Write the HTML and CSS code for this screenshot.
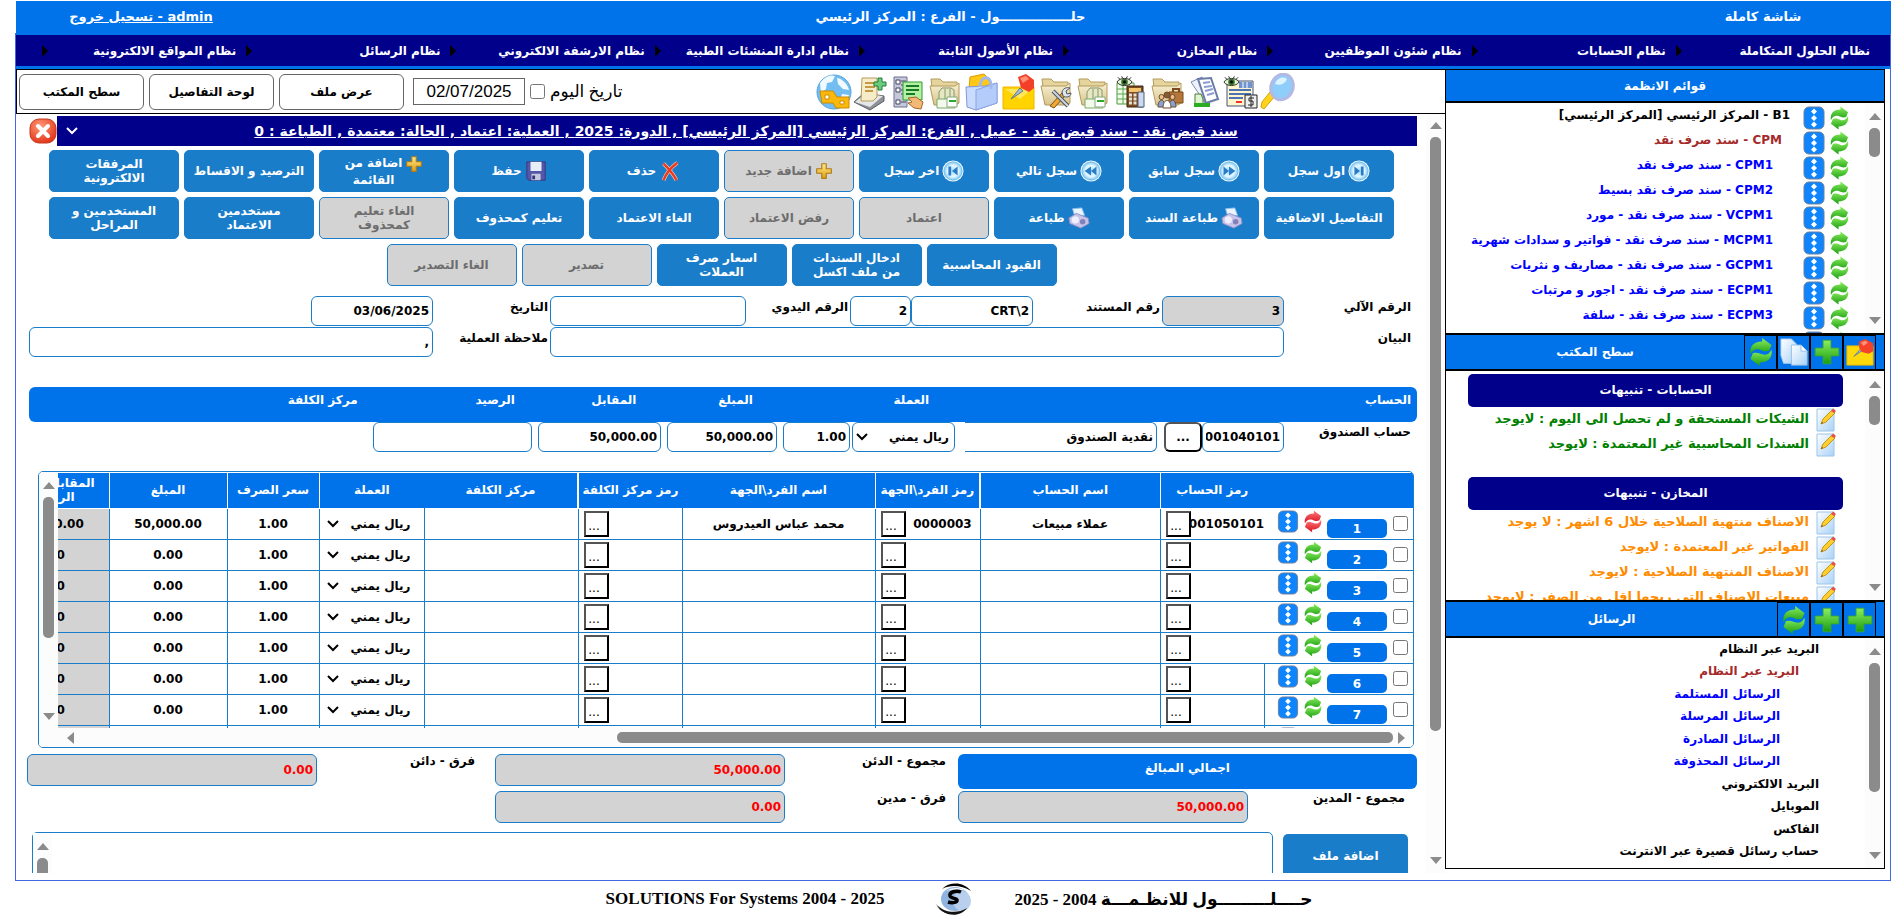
FILE: index.html
```html
<!DOCTYPE html>
<html lang="ar" dir="rtl">
<head>
<meta charset="utf-8">
<title>حلول - سند قبض نقد</title>
<link rel="stylesheet" href="styles.css">
</head>
<body>
<svg class="sprite" aria-hidden="true">
  <defs>
    <linearGradient id="gGreen" x1="0" y1="0" x2="0" y2="1"><stop offset="0" stop-color="#8cf060"/><stop offset="1" stop-color="#1a9c10"/></linearGradient>
    <linearGradient id="gRed" x1="0" y1="0" x2="0" y2="1"><stop offset="0" stop-color="#ff7a7a"/><stop offset="1" stop-color="#d80f1c"/></linearGradient>
    <linearGradient id="gPaper" x1="0" y1="0" x2="1" y2="1"><stop offset="0" stop-color="#ffffff"/><stop offset="1" stop-color="#a9d2f7"/></linearGradient>
    <linearGradient id="gGold" x1="0" y1="0" x2="0" y2="1"><stop offset="0" stop-color="#ffe98a"/><stop offset="1" stop-color="#e0a012"/></linearGradient>
    <linearGradient id="gFolder" x1="0" y1="0" x2="0" y2="1"><stop offset="0" stop-color="#f8f1d4"/><stop offset="1" stop-color="#d9c48c"/></linearGradient>
    <radialGradient id="gBall"><stop offset="0" stop-color="#9fdcff"/><stop offset=".6" stop-color="#e8f8ff"/><stop offset="1" stop-color="#7cc8f4"/></radialGradient>
    <radialGradient id="gClose" cx=".4" cy=".3" r=".8"><stop offset="0" stop-color="#ff9a78"/><stop offset="1" stop-color="#e02a10"/></radialGradient>
  </defs>
  <symbol id="arrows" viewBox="0 0 20 24"><path d="M1 14C0 8 3 3 11 3V0l8 6-2 5c-4 1-5 0-8-1-3-1-6 0-8 4Z"/><path d="M19 10c1 6-2 11-10 11v3l-8-6 2-5c4-1 5 0 8 1 3 1 6 0 8-4Z"/></symbol>
  <symbol id="dots" viewBox="0 0 22 24"><rect x="1" y="1" width="20" height="22" rx="5" fill="#0f84ff" stroke="#6f7f96"/><g fill="#fff"><path d="m11 2.500 3 3-3 3-3-3zM11 9l3 3-3 3-3-3zM11 15.500l3 3-3 3-3-3z"/></g></symbol>
  <symbol id="plus" viewBox="0 0 32 32"><path d="M11.500 2.500h9v9h9v9h-9v9h-9v-9h-9v-9h9z" fill="url(#gGreen)" stroke="#3aa82c" stroke-linejoin="round"/></symbol>
  <symbol id="goldplus" viewBox="0 0 32 32"><path d="M12 3h8v9h9v8h-9v9h-8v-9H3v-8h9z" fill="url(#gGold)" stroke="#b07a18" stroke-width="2" stroke-linejoin="round"/></symbol>
  <symbol id="copy" viewBox="0 0 32 32"><path d="M1 1h12l6 6v22H4L1 20z" fill="url(#gPaper)" stroke="#9cc4ea"/><path d="M13 8h11l7 7v16H13z" fill="url(#gPaper)" stroke="#8bb8e4"/><path d="M24 8v7h7" fill="#fff" stroke="#8bb8e4"/></symbol>
  <symbol id="pin" viewBox="0 0 32 32"><path d="M1 9h30v22H1z" fill="#ffd90a" stroke="#e3b300"/><path d="M9 21 17 12l2 2z" fill="#9db4c8" stroke="#64809a"/><path d="m15 4 7-3 9 5v9l-5 3-8-2-3-5z" fill="#f5432a"/><path d="m17 5 5-2 3 2-5 4z" fill="#ff9378"/></symbol>
  <symbol id="note" viewBox="0 0 20 24"><path d="M1 1h17v22H1z" fill="url(#gPaper)" stroke="#9cc4ea"/><path d="m5 16 2-5 9-9 3 3-9 9z" fill="#ffcf2e" stroke="#c99416"/><path d="m5 16 1-2 1 1z" fill="#444"/><path d="m15 3 2-2.500 3 2.500-2 2z" fill="#e6504c"/></symbol>
  <symbol id="close" viewBox="0 0 28 26"><rect x="1" y="1" width="26" height="24" rx="9" fill="url(#gClose)" stroke="#c23a20"/><path d="m9 8 10 10M19 8 9 18" stroke="#fff" stroke-width="4" stroke-linecap="round"/></symbol>
  <symbol id="ball" viewBox="0 0 24 24"><circle cx="12" cy="12" r="11.500" fill="#fff"/><circle cx="12" cy="12" r="10" fill="url(#gBall)" stroke="#6bbcf0"/></symbol>
  <symbol id="first" viewBox="0 0 24 24"><use href="#ball"/><path d="M7 7v10l6-5zM14 7h3v10h-3z" fill="#2a7cc8"/></symbol>
  <symbol id="prev" viewBox="0 0 24 24"><use href="#ball"/><path d="M6 7v10l6-5zM12 7v10l7-5z" fill="#2a7cc8"/></symbol>
  <symbol id="next" viewBox="0 0 24 24"><use href="#ball"/><path d="M12 7v10l-7-5zM18 7v10l-6-5z" fill="#2a7cc8"/></symbol>
  <symbol id="last" viewBox="0 0 24 24"><use href="#ball"/><path d="M7 7h3v10H7zM17 7v10l-6-5z" fill="#2a7cc8"/></symbol>
  <symbol id="printer" viewBox="0 0 24 24"><path d="m5 2 10-1 3 8-10 3z" fill="#eaf5ff" stroke="#8fc3ea"/><path d="m1 12 8-5 13 5 1 6-9 5L2 18z" fill="#c6c4ea" stroke="#8f8cc4"/><circle cx="8" cy="14" r="4" fill="#f0eefc"/><circle cx="16" cy="16" r="3" fill="#8481b8"/></symbol>
  <symbol id="cross" viewBox="0 0 24 24"><path d="M5 4c4 4 10 10 14 18M20 3C13 8 8 14 5 22" fill="none" stroke="#ffc4b0" stroke-width="4"/><path d="M5 4c4 4 10 10 14 18M20 3C13 8 8 14 5 22" fill="none" stroke="#ea3a20" stroke-width="2.500"/></symbol>
  <symbol id="disk" viewBox="0 0 24 24"><path d="M2 2h20v20H4l-2-2z" fill="#5656a8" stroke="#34347c"/><path d="M6 2h12v10H6z" fill="#e8eef8"/><path d="M7 15h10v7H7z" fill="#c4c8dc"/><path d="M8 17h3v4H8z" fill="#34347c"/></symbol>
  <symbol id="search" viewBox="0 0 36 38"><path d="m4 36-3-2 1-5 8-10 5 4z" fill="#ffd21c" stroke="#d9a200"/><ellipse cx="22" cy="14" rx="11" ry="13" fill="#8fcdfb" stroke="#b4b8e4" stroke-width="3" transform="rotate(20 22 14)"/><path d="M15 11c2-6 8-8 12-5-2 5-7 7-12 5z" fill="#dff3ff"/></symbol>
  <symbol id="eye" viewBox="0 0 18 12"><path d="M1 6c3-5 13-5 16 0-3 5-13 5-16 0z" fill="#e6f4d8" stroke="#222"/><circle cx="9" cy="6" r="3.500" fill="#38702a"/><circle cx="9" cy="6" r="1.500"/><path d="M4 3 2 1M7 2 6 0M11 2l1-2M14 3l2-2" stroke="#222"/></symbol>
  <symbol id="report" viewBox="0 0 36 38"><path d="M4 8h26v25H4z" fill="#fff6cc" stroke="#44527c"/><path d="M6 17h22M6 21h22M6 25h14" stroke="#4d72b8" stroke-width="2"/><path d="M13 29h6" stroke="#e33" stroke-width="2"/><path d="M16 9h13v6H16z" fill="#7094d0"/><path d="M20 9v6M24 9v6" stroke="#fff"/><use href="#eye" x="0" y="3" width="17" height="12"/><path d="M22 22h12v13H22z" fill="#eee" stroke="#222"/><path d="M31 25h-5v3h4v4h-5M28 23v11" fill="none" stroke="#222"/></symbol>
  <symbol id="docs" viewBox="0 0 36 38"><path d="m5 9 11-5 12 18-9 8z" fill="#eef2fb" stroke="#7b8bb0"/><path d="m12 6 13-1 7 21-12 4z" fill="#fff" stroke="#6b7ba8" stroke-width="2"/><path d="m17 10 7-1M18 14l8-1M19 18l8-2M21 22l7-2" stroke="#8c9cd0" stroke-width="2"/><path d="M9 21h6l2 5v6H9z" fill="#dff5d0" stroke="#4a7a3a"/><path d="M8 30h16v4H8z" fill="#2cab24"/></symbol>
  <symbol id="folder" viewBox="0 0 36 38"><path d="M4 6h9l3 3h14v22H7z" fill="#e5d49c" stroke="#b39b5c"/><path d="M3 13h25l4-3v20l-3 2H7z" fill="url(#gFolder)" stroke="#b39b5c"/></symbol>
  <symbol id="people" viewBox="0 0 36 38"><use href="#folder"/><path d="M20 19h14v11H20z" fill="#b5763a" stroke="#7c4a1c"/><path d="M24 19v-3h6v3" fill="none" stroke="#7c4a1c" stroke-width="2"/><g stroke="#6c4b2c"><path d="M9 34c0-9 7-9 7 0zM20 34c0-9 7-9 7 0z" fill="#86a0d8"/><path d="M14 35c0-10 8-10 8 0z" fill="#fff"/><circle cx="12.500" cy="24" r="2.500" fill="#f0c090"/><circle cx="18" cy="22" r="3" fill="#8a5a30"/><circle cx="23.500" cy="24" r="2.500" fill="#f0c090"/></g></symbol>
  <symbol id="calc" viewBox="0 0 36 38"><path d="M5 10h17v21H5z" fill="#f2fbea" stroke="#4a9a3a"/><path d="M5 16h17M5 21h17M5 26h17M11 10v21" stroke="#56a84a"/><path d="M15 13h16v21H15z" fill="#7b4a20" stroke="#3c2410"/><path d="M17 15h12v4H17z" fill="#f4c46c"/><path d="M17 22h12M17 26h12M17 30h12" stroke="#e8e2d4" stroke-width="3" stroke-dasharray="3 1.500"/><path d="M26 19h6v15h-6z" fill="#cfd8ec" stroke="#4c5c80"/><use href="#eye" x="4" y="3" width="17" height="12"/></symbol>
  <symbol id="money" viewBox="0 0 36 38"><use href="#folder"/><path d="m12 19 3-4h9l3 2v11H12z" fill="#e4e9c4" stroke="#88946a"/><path d="M18 16v12M23 16v12" stroke="#88946a"/><path d="M10 26h18v9H10z" fill="#f2faee" stroke="#7aa86a"/><path d="M20 24h10v10H20z" fill="#fff" stroke="#88a878"/><path d="M22 28h7" stroke="#2ca82c" stroke-width="2"/></symbol>
  <symbol id="tools" viewBox="0 0 36 38"><use href="#folder"/><path d="m12 33 12-13 3 3-11 12z" fill="#f0a834" stroke="#7c5214"/><path d="m15 18 15 15" stroke="#4c5460" stroke-width="4"/><path d="m15 18 15 15" stroke="#cfd6de" stroke-width="2"/><path d="M24 19c1-4 5-5 8-4l-4 3 1 3 4-1c0 4-5 5-8 3z" fill="#dfe5ec" stroke="#4c5460"/></symbol>
  <symbol id="bigpin" viewBox="0 0 36 38"><path d="M2 14h31v22H2z" fill="#ffd400" stroke="#f0b400"/><path d="M4 16h27l-12 10z" fill="#ffe65c"/><path d="M10 26 19 15l3 3z" fill="#a8bccc" stroke="#60788c"/><path d="m17 4 8-3 8 6v8l-5 4-8-4z" fill="#f24028"/><path d="m19 5 6-2 3 3-6 4z" fill="#ff9078"/></symbol>
  <symbol id="bag" viewBox="0 0 36 38"><path d="M6 4 20 1l6 6v9H5z" fill="#ffc914" stroke="#d99e00"/><path d="m2 14 19-1 12-3v20L12 37 3 34z" fill="#c9dcff" stroke="#7f98d8"/><path d="m12 17 21-7v20l-21 7z" fill="#b4ccfa" stroke="#8ba4e0"/><path d="M16 14c0-12 11-12 11-2v4" fill="none" stroke="#a3b8ec" stroke-width="3"/></symbol>
  <symbol id="list" viewBox="0 0 36 38"><path d="M4 4h13v30H4z" fill="#c4c8d8" stroke="#6c7090"/><path d="M6 7h4v4H6zM6 15h4v4H6zM6 27h4v4H6z" fill="#fff" stroke="#446"/><path d="M11 8h5M11 12h5M11 17h5M11 21h5M11 29h5" stroke="#446"/><path d="M13 9h19v18H13z" fill="#b4f0a4" stroke="#2f9a30"/><path d="M16 13h13M16 17h13M16 21h9" stroke="#187a24" stroke-width="2"/><path d="m18 25 8-1 7 5-2 7-7-1-6-5 4-1z" fill="#f4b876" stroke="#a5642c"/></symbol>
  <symbol id="bookadd" viewBox="0 0 36 38"><path d="m1 29 10-9 20 3v5L17 37z" fill="#8e9298" stroke="#585c62"/><path d="m2 29 10-8 18 2-13 11z" fill="#e4e6e8"/><path d="M9 5h15v19l-4 4H8z" fill="#f6ecc8" stroke="#b39b5c"/><path d="M12 10h9M12 14h10M12 18h8" stroke="#c49a44" stroke-width="2"/><path d="M21 9h4V5h4v4h4v4h-4v4h-4v-4h-4z" fill="#6ccc7c" stroke="#1c7c3c"/></symbol>
  <symbol id="globe" viewBox="0 0 36 38"><circle cx="18" cy="19" r="17" fill="#72bdf2" stroke="#56a4dc"/><path d="M4 10c6-8 12-8 15-7l-3 6-5 1-1 6-5 4zM21 5c6 1 11 7 12 12l-6-1-5-5zM26 21l7 1c-2 7-7 10-11 12z" fill="#f0faff"/><path d="M4 18h13l4 6h12v11H20l-3-5H6z" fill="#fbb80c" stroke="#cf8a00"/><path d="M9 22h4v4H9zM24 28h4v3h-4z" fill="#fff" stroke="#cf8a00"/></symbol>
  <symbol id="logo" viewBox="0 0 40 32"><ellipse cx="21" cy="16" rx="14" ry="12" fill="#8fb4e0"/><ellipse cx="28" cy="18" rx="9" ry="10" fill="#b8d0ee"/><path d="M8 6C16-2 30-1 37 8 28 3 18 1 8 6Z"/><path d="M12 8c6-4 14-4 20 0-7-2-13-2-20 0Z" fill="#fff"/><path d="M1 18c2 10 18 16 32 8-9 7-28 8-32-8Z" fill="#333"/><path d="M3 22c8 8 20 9 30 3-6 9-22 10-30-3Z" fill="#111"/><path d="M27 9c-5-2-12 0-11 4 1 3 8 2 7 5-1 2-6 2-9 1" fill="none" stroke="#000" stroke-width="3.500"/></symbol>
  <symbol id="chev" viewBox="0 0 12 8"><path d="m1 1 5 5 5-5" fill="none" stroke="currentColor" stroke-width="2"/></symbol>
  <symbol id="tri" viewBox="0 0 12 7"><path d="M6 0l6 7H0z" fill="#8b8b8b"/></symbol>
  <symbol id="triH" viewBox="0 0 7 12"><path d="M0 6l7-6v12z" fill="#8b8b8b"/></symbol>
</svg>

<header class="topbar">
  <a href="#full">شاشة كاملة</a>
  <h1>حلــــــــــــــــول - الفرع : المركز الرئيسي</h1>
  <a class="logout" href="#logout">admin - تسجيل خروج</a>
</header>
<div class="frame">
  <nav class="systems">
    <a href="#s1">نظام الحلول المتكاملة</a>
    <a href="#s2">نظام الحسابات</a>
    <a href="#s3">نظام شئون الموظفيين</a>
    <a href="#s4">نظام المخازن</a>
    <a href="#s5">نظام الأصول الثابتة</a>
    <a href="#s6">نظام ادارة المنشئات الطبية</a>
    <a href="#s7">نظام الارشفة الالكتروني</a>
    <a href="#s8">نظام الرسائل</a>
    <a href="#s9">نظام المواقع الالكترونية</a>
  </nav>
  <div class="workspace">
    <aside class="side">
      <section class="panel panel-systems">
        <header class="panel-head"><h2>قوائم الانظمة</h2></header>
        <div class="panel-body">
          <div class="vbar"><svg><use href="#tri"/></svg><i class="thumb thumb-s"></i><svg class="down"><use href="#tri"/></svg></div>
          <ul class="menu" id="menu"></ul>
        </div>
      </section>
      <section class="panel">
        <header class="panel-head">
          <div class="tools">
            <button aria-label="تثبيت"><svg><use href="#pin"/></svg></button>
            <button aria-label="اضافة"><svg><use href="#plus"/></svg></button>
            <button aria-label="نسخ"><svg><use href="#copy"/></svg></button>
            <button aria-label="تحديث"><svg class="green"><use href="#arrows"/></svg></button>
          </div>
          <h2>سطح المكتب</h2>
        </header>
        <div class="panel-body">
          <div class="vbar"><svg><use href="#tri"/></svg><i class="thumb thumb-s"></i><svg class="down"><use href="#tri"/></svg></div>
          <div class="alerts">
            <h3>الحسابات - تنبيهات</h3>
            <ul class="ok">
              <li><svg><use href="#note"/></svg><a href="#a1">الشيكات المستحقة و لم تحصل الى اليوم : لايوجد</a></li>
              <li><svg><use href="#note"/></svg><a href="#a2">السندات المحاسبية غير المعتمدة : لايوجد</a></li>
            </ul>
            <h3>المخازن - تنبيهات</h3>
            <ul class="warn">
              <li><svg><use href="#note"/></svg><a href="#a3">الاصناف منتهية الصلاحية خلال 6 اشهر : لا يوجد</a></li>
              <li><svg><use href="#note"/></svg><a href="#a4">الفواتير غير المعتمدة : لايوجد</a></li>
              <li><svg><use href="#note"/></svg><a href="#a5">الاصناف المنتهية الصلاحية : لايوجد</a></li>
              <li><svg><use href="#note"/></svg><a href="#a6">مبيعات الاصناف التي ربحها اقل من الصفر : لايوجد</a></li>
            </ul>
          </div>
        </div>
      </section>
      <section class="panel">
        <header class="panel-head">
          <div class="tools">
            <button aria-label="رسالة جديدة"><svg><use href="#plus"/></svg></button>
            <button aria-label="اضافة"><svg><use href="#plus"/></svg></button>
            <button aria-label="تحديث"><svg class="green"><use href="#arrows"/></svg></button>
          </div>
          <h2>الرسائل</h2>
        </header>
        <div class="panel-body">
          <div class="vbar"><svg><use href="#tri"/></svg><i class="thumb thumb-l"></i><svg class="down"><use href="#tri"/></svg></div>
          <ul class="mail">
            <li>البريد عبر النظام</li>
            <li class="l2">البريد عبر النظام</li>
            <li class="l3"><a href="#m1">الرسائل المستلمة</a></li>
            <li class="l3"><a href="#m2">الرسائل المرسلة</a></li>
            <li class="l3"><a href="#m3">الرسائل الصادرة</a></li>
            <li class="l3"><a href="#m4">الرسائل المحذوفة</a></li>
            <li>البريد الالكتروني</li>
            <li>الموبايل</li>
            <li>الفاكس</li>
            <li>حساب رسائل قصيرة عبر الانترنت</li>
          </ul>
        </div>
      </section>
    </aside>

    <main class="main">
      <div class="toolbar">
        <div class="icons" id="icons"></div>
        <div class="quick">
          <label class="today" for="today">تاريخ اليوم</label>
          <input type="checkbox" id="today">
          <input type="text" class="date" aria-label="التاريخ الحالي" value="02/07/2025">
          <button>عرض ملف</button>
          <button>لوحة التفاصيل</button>
          <button>سطح المكتب</button>
        </div>
      </div>
      <div class="stage">
        <div class="vbar"><svg><use href="#tri"/></svg><i class="thumb thumb-m"></i><svg class="down"><use href="#tri"/></svg></div>
        <div class="doc">
          <div class="title-row">
            <button class="title"><span>سند قبض نقد - سند قبض نقد - عميل , الفرع: المركز الرئيسي [المركز الرئيسي] , الدورة: 2025 , العملية: اعتماد , الحالة: معتمدة , الطباعة : 0</span><svg><use href="#chev"/></svg></button>
            <button class="close" aria-label="اغلاق"><svg><use href="#close"/></svg></button>
          </div>
          <div class="actions">
            <button><svg><use href="#first"/></svg><span>اول سجل</span></button>
            <button><svg><use href="#prev"/></svg><span>سجل سابق</span></button>
            <button><svg><use href="#next"/></svg><span>سجل تالي</span></button>
            <button><svg><use href="#last"/></svg><span>اخر سجل</span></button>
            <button disabled><svg class="small"><use href="#goldplus"/></svg><span>اضافة جديد</span></button>
            <button><svg><use href="#cross"/></svg><span>حذف</span></button>
            <button><svg><use href="#disk"/></svg><span>حفظ</span></button>
            <button class="multi"><svg class="small"><use href="#goldplus"/></svg><span>اضافة من<br>القائمة</span></button>
            <button><span>الترصيد و الاقساط</span></button>
            <button><span>المرفقات<br>الالكترونية</span></button>
            <button><span>التفاصيل الاضافية</span></button>
            <button><svg><use href="#printer"/></svg><span>طباعة السند</span></button>
            <button><svg><use href="#printer"/></svg><span>طباعة</span></button>
            <button disabled><span>اعتماد</span></button>
            <button disabled><span>رفض الاعتماد</span></button>
            <button><span>الغاء الاعتماد</span></button>
            <button><span>تعليم كمحذوف</span></button>
            <button disabled><span>الغاء تعليم<br>كمحذوف</span></button>
            <button><span>مستخدمين<br>الاعتماد</span></button>
            <button><span>المستخدمين و<br>المراحل</span></button>
            <button><span>القيود المحاسبية</span></button>
            <button><span>ادخال السندات<br>من ملف اكسل</span></button>
            <button><span>اسعار صرف<br>العملات</span></button>
            <button disabled><span>تصدير</span></button>
            <button disabled><span>الغاء التصدير</span></button>
          </div>

          <div class="form">
            <label for="f1">الرقم الآلي</label><input id="f1" value="3" readonly>
            <label class="near" for="f2">رقم المستند</label><input id="f2" value="CRT\2"><input aria-label="رقم الفرع" value="2">
            <label class="near" for="f3">الرقم اليدوي</label><input id="f3">
            <label class="near" for="f4">التاريخ</label><input id="f4" value="03/06/2025">
            <label class="row2" for="f5">البيان</label><input class="wide" id="f5">
            <label class="near" for="f6">ملاحظة العملية</label><input class="rest" id="f6" value=",">
          </div>

          <div class="fund-head">
            <span>الحساب</span><span>العملة</span><span>المبلغ</span><span>المقابل</span><span>الرصيد</span><span>مركز الكلفة</span>
          </div>
          <div class="fund">
            <label for="g1">حساب الصندوق</label>
            <input id="g1" value="001040101">
            <button class="more" aria-label="بحث عن حساب">...</button>
            <input class="open" aria-label="اسم الحساب" value="نقدية الصندوق">
            <span class="pick"><select aria-label="العملة"><option>ريال يمني</option></select><svg><use href="#chev"/></svg></span>
            <input aria-label="سعر الصرف" value="1.00">
            <input aria-label="المبلغ" value="50,000.00">
            <input aria-label="المقابل" value="50,000.00">
            <input aria-label="الرصيد">
          </div>

          <div class="grid-box">
            <div class="grid-view">
              <div class="grid-clip">
                <table>
                  <colgroup><col class="c-sel"><col class="c-code"><col class="c-name"><col class="c-code2"><col class="c-name2"><col class="c-code"><col class="c-cost"><col class="c-cur"><col class="c-rate"><col class="c-amt"><col class="c-amt"></colgroup>
                  <thead><tr><th></th><th class="sep">رمز الحساب</th><th class="sep thick">اسم الحساب</th><th class="sep">رمز الفرد\الجهة</th><th>اسم الفرد\الجهة</th><th class="sep thick">رمز مركز الكلفة</th><th>مركز الكلفة</th><th class="sep">العملة</th><th class="sep">سعر الصرف</th><th class="sep">المبلغ</th><th>المقابل بالعملة<br>الرئيسية</th></tr></thead>
                  <tbody id="rows"></tbody>
                </table>
              </div>
              <div class="vbar gridbar"><svg><use href="#tri"/></svg><i class="thumb thumb-g"></i><svg class="down"><use href="#tri"/></svg></div>
            </div>
            <div class="hbar"><svg class="right"><use href="#triH"/></svg><i class="hthumb"></i><svg><use href="#triH"/></svg></div>
          </div>

          <div class="totals">
            <div class="sum-title">اجمالي المبالغ</div>
            <label for="t1">مجموع - الدئن</label><input id="t1" value="50,000.00" readonly>
            <label class="far" for="t2">فرق - دائن</label><input id="t2" value="0.00" readonly>
            <label for="t3">مجموع - المدين</label><input id="t3" value="50,000.00" readonly>
            <label for="t4">فرق - مدين</label><input id="t4" value="0.00" readonly>
          </div>
          <div class="files">
            <button>اضافة ملف</button>
            <div class="file-list"><div class="vbar"><svg><use href="#tri"/></svg><i class="thumb thumb-s"></i></div></div>
          </div>
        </div>
      </div>
    </main>
  </div>
</div>
<footer class="foot">
  <span>حــــلـــــــــول للانظـمـــة 2004 - 2025</span>
  <svg><use href="#logo"/></svg>
  <span dir="ltr">SOLUTIONS For Systems 2004 - 2025</span>
</footer>
<script src="app.js"></script>
</body>
</html>
```

FILE: styles.css
```css
* { box-sizing: border-box; }
html, body { height: 100%; }
body {
  margin: 0;
  padding-top: 1px;
  display: flex;
  flex-direction: column;
  background: #fff;
  color: #000;
  font: bold 12px "DejaVu Sans", sans-serif;
  overflow: hidden;
}
h1, h2, h3, ul { margin: 0; padding: 0; font: inherit; }
ul { list-style: none; }
a { color: inherit; text-decoration: none; }
input, button, select { font: inherit; color: inherit; margin: 0; }
svg { display: block; flex: none; }
.sprite { position: absolute; width: 0; height: 0; }
.green { fill: url(#gGreen); }
.red { fill: url(#gRed); }

.topbar {
  display: grid;
  grid-template-columns: 256px 1fr 250px;
  align-items: center;
  justify-items: center;
  height: 32px;
  flex: none;
  margin-left: 16px;
  padding-bottom: 2px;
  background: #0073ea;
  color: #fff;
  font-size: 13px;
}
.logout { text-decoration: underline; }

.frame {
  flex: 1;
  min-height: 0;
  display: flex;
  flex-direction: column;
  margin-left: 15px;
  border: 1px solid #4169e1;
  border-top: 0;
}
.systems {
  display: grid;
  grid-template-columns: repeat(9, 1fr);
  flex: none;
  height: 36px;
  padding: 0 10px 0 26px;
  border-top: 2px solid #0073ea;
  border-bottom: 3px solid #0073ea;
  background: #00008b;
  color: #fff;
}
.systems a {
  display: flex;
  align-items: center;
  justify-content: space-between;
  padding-right: 10px;
  white-space: nowrap;
}
.systems a::after {
  content: "";
  border: 6px solid transparent;
  border-left-color: #000;
  border-right: 0;
}

.workspace { flex: 1; min-height: 0; display: flex; padding-bottom: 7px; }

.vbar {
  flex: none;
  width: 19px;
  display: flex;
  flex-direction: column;
  align-items: center;
  padding: 10px 0 9px;
  gap: 8px;
  background: #fcfcfc;
}
.vbar svg { width: 12px; height: 7px; }
.vbar .down { margin-top: auto; transform: rotate(180deg); }
.thumb { width: 11px; border-radius: 5px; background: #8b8b8b; flex: none; }
.thumb-s { height: 29px; }
.thumb-m { height: 80%; }
.thumb-l { height: 61%; }
.thumb-g { height: 141px; }

.side { flex: none; width: 440px; margin: 0 5px 4px 0; display: flex; flex-direction: column; }
.panel { flex: 268; min-height: 0; display: flex; flex-direction: column; border: 1px solid #000; }
.panel-systems { flex-grow: 265; }
.panel-head {
  flex: none;
  display: flex;
  height: 36px;
  border-bottom: 2px solid #000;
  background: #0073ea;
  color: #fff;
}
.panel-systems .panel-head { height: 33px; }
.panel-head h2 { flex: 1; align-self: center; text-align: center; }
.tools { display: flex; padding-right: 8px; }
.tools button {
  width: 33px;
  padding: 0;
  border: 1px solid #000;
  border-bottom: 0;
  background: none;
  display: flex;
  align-items: center;
  justify-content: center;
}
.tools svg { width: 28px; height: 28px; }
.panel-body { flex: 1; min-height: 0; display: flex; overflow: hidden; }
.menu { padding: 2px 16px 0 0; flex: 1; color: #00f; }
.menu li { display: flex; height: 25px; white-space: nowrap; }
.menu svg { width: 19px; height: 24px; margin-top: 1px; }
.menu .dots { width: 22px; margin: 1px 5px 0 0; }
.menu a { line-height: 20px; padding-right: 30px; }
.menu .l1 { padding-right: 13px; color: #000; }
.menu .l2 { padding-right: 21px; color: #a52a2a; }
.alerts { flex: 1; padding: 3px 22px 0; white-space: nowrap; font-size: 13px; }
.alerts h3 {
  height: 33px;
  line-height: 33px;
  border-radius: 5px;
  background: #00008b;
  color: #fff;
  font-size: 12px;
  text-align: center;
}
.alerts ul { padding-right: 7px; }
.alerts li { display: flex; gap: 7px; height: 25px; padding-top: 1px; line-height: 22px; }
.alerts li svg { width: 20px; height: 24px; }
.alerts .ok { color: #008000; padding-bottom: 20px; }
.warn { color: #ff8c00; }
.mail { padding: 0 46px 0 0; line-height: 22px; }
.mail li:nth-child(even) { padding-bottom: 1px; }
.mail .l2 { padding-right: 20px; color: #a52a2a; }
.mail .l3 { padding-right: 39px; color: #00f; }

.main { flex: 1; min-width: 0; display: flex; flex-direction: column; }
.toolbar {
  flex: none;
  display: flex;
  align-items: center;
  justify-content: space-between;
  height: 45px;
  padding: 0 149px 0 2px;
  border: 1px solid #000;
  border-right: 0;
}
.icons { display: flex; gap: 1px; }
.icons button { padding: 0; border: 0; background: none; }
.icons svg { width: 36px; height: 38px; }
.quick { display: flex; align-items: center; gap: 5px; }
.quick button {
  width: 125px;
  height: 36px;
  border: 1px solid #666;
  border-radius: 6px;
  background: #fff;
}
.today { font: 17px "Liberation Serif", "DejaVu Sans", serif; }
.quick [type="checkbox"] { width: 15px; height: 15px; }
.date {
  width: 112px;
  height: 27px;
  margin-left: 4px;
  border: 1px solid #666;
  font: 17px "Liberation Sans", sans-serif;
  text-align: center;
  padding: 0;
}

.stage { flex: 1; min-height: 0; display: flex; }
.stage > .vbar { padding-top: 8px; }
.doc { flex: 1; min-width: 0; overflow: hidden; padding: 2px 9px 0 13px; }
.title-row { display: flex; height: 30px; }
.title {
  flex: 1;
  display: flex;
  align-items: center;
  padding: 0 3px 0 9px;
  border: 0;
  background: #00008b;
  color: #fff;
  font-size: 14px;
}
.title span { flex: 1; text-decoration: underline; white-space: nowrap; }
.title svg { width: 12px; height: 8px; }
.close { padding: 0; border: 0; background: none; }
.close svg { width: 28px; height: 26px; }

.actions { display: flex; flex-wrap: wrap; justify-content: center; gap: 5px; padding: 4px 3px 10px 0; }
.actions button {
  width: 130px;
  height: 42px;
  display: flex;
  align-items: center;
  justify-content: center;
  gap: 3px;
  padding: 0;
  border: 1px solid #1a7dca;
  border-radius: 5px;
  background: #1a7dca;
  color: #fff;
  line-height: 14px;
}
.actions button:disabled { background: #d3d3d3; color: #6d6d6d; }
.actions svg { width: 22px; height: 22px; }
.actions .small { width: 18px; height: 18px; }
.actions .multi { align-items: flex-start; line-height: 17px; padding-top: 4px; }

.form input, .fund input, .fund select, .totals input {
  min-width: 0;
  height: 30px;
  padding: 0 3px;
  border: 1px solid #1a7dca;
  border-radius: 6px;
  background: #fff;
}
.form input[readonly], .totals input[readonly] { background: #d3d3d3; }
.form {
  display: grid;
  grid-template-columns: 133fr 122fr 129fr 122fr 61fr 104fr 196fr 117fr 122fr 282fr;
  row-gap: 1px;
  padding-bottom: 30px;
}
.form label { height: 22px; line-height: 22px; padding-right: 6px; white-space: nowrap; }
.form .near { padding-right: 2px; }
.form .row2 { grid-column: 1; }
.form .wide { grid-column: 2 / span 6; }
.form .rest { grid-column: 9 / span 2; }

.fund-head {
  display: grid;
  grid-template-columns: 484fr 177fr 117fr 122fr 158fr 330fr;
  height: 35px;
  padding-right: 6px;
  line-height: 26px;
  border-radius: 6px;
  background: #0073ea;
  color: #fff;
}
.fund {
  display: grid;
  grid-template-columns: 133fr 82fr 38fr 7fr 192fr 10fr 103fr 2fr 67fr 6fr 110fr 6fr 123fr 6fr 159fr 344fr;
  padding-bottom: 19px;
}
.fund label { line-height: 20px; padding-right: 6px; }
.fund > :nth-child(4) { grid-column: 5; }
.fund > :nth-child(5) { grid-column: 7; }
.fund > :nth-child(6) { grid-column: 9; }
.fund > :nth-child(7) { grid-column: 11; }
.fund > :nth-child(8) { grid-column: 13; }
.fund > :nth-child(9) { grid-column: 15; }
.more { border: 2px outset #000; border-radius: 6px; background: #fff; padding: 0; }
.fund .open { border-left: 0; border-radius: 0 6px 6px 0; }
.pick { display: flex; position: relative; }
.pick select { appearance: none; flex: 1; min-width: 0; padding: 0 5px 0 20px; }
.pick svg { position: absolute; left: 4px; top: 50%; margin-top: -4px; width: 12px; height: 8px; }

.grid-box { margin: 0 3px 6px 9px; border: 1px solid #1a7dca; border-radius: 5px; overflow: hidden; }
.grid-view { display: flex; height: 256px; }
.grid-clip { flex: 1; min-width: 0; overflow: hidden; padding-top: 1px; }
.gridbar { padding-bottom: 8px; }
table { table-layout: fixed; width: 1421px; border-collapse: collapse; }
.c-sel { width: 149px; }
.c-code { width: 104px; }
.c-name { width: 180px; }
.c-code2 { width: 105px; }
.c-name2 { width: 193px; }
.c-cost { width: 154px; }
.c-cur { width: 105px; }
.c-rate { width: 92px; }
.c-amt { width: 118px; }
th { height: 35px; padding: 0; background: #0073ea; color: #fff; white-space: nowrap; line-height: 14px; }
th.sep { border-left: 1px solid #fff; }
th.thick { border-left-width: 2px; }
td { height: 31px; padding: 0; border: 1px solid #1a7dca; border-right: 0; }
tbody tr:first-child td { border-top: 1px solid #fff; }
td input[type="text"] { display: block; width: 100%; height: 26px; border: 0; padding: 0; background: none; text-align: center; }
td.open { border-left: 0; }
td.gray { background: #d3d3d3; }
.sel { display: flex; align-items: center; height: 28px; padding-right: 5px; }
.sel input { width: 15px; height: 15px; }
.sel b { width: 60px; height: 19px; margin: 9px 6px 0 0; line-height: 21px; border-radius: 5px; background: #0073ea; color: #fff; text-align: center; }
.sel svg { width: 18px; height: 23px; margin: 0 5px 4px 0; }
.sel .dots { width: 22px; }
.code { display: flex; align-items: center; padding-left: 5px; }
.code input[type="text"] { flex: 1; min-width: 0; }
.code button {
  flex: none;
  width: 25px;
  height: 26px;
  padding: 4px 4px 0 0;
  border: 2px outset #000;
  background: #fff;
  font-weight: normal;
}
td .pick select { height: 26px; border: 0; background: none; padding-right: 13px; }
td .pick svg { left: 7px; }
.hbar { display: flex; align-items: center; height: 19px; padding: 0 8px 0 28px; background: #fcfcfc; }
.hbar svg { width: 7px; height: 12px; margin-right: auto; }
.hbar .right { transform: rotate(180deg); margin: 0 0 0 5px; }
.hthumb { width: 58%; height: 11px; border-radius: 5px; background: #8b8b8b; }

.totals {
  display: grid;
  grid-template-columns: 169fr 290fr 173fr 290fr 178fr 290fr;
  row-gap: 2px;
  margin-left: -2px;
}
.sum-title {
  grid-column: span 2;
  height: 35px;
  line-height: 28px;
  border-radius: 6px;
  background: #0073ea;
  color: #fff;
  text-align: center;
}
.totals label { line-height: 14px; padding-right: 12px; }
.totals .far { padding-right: 20px; }
.totals input { height: 32px; color: #f00; }
.files { display: flex; align-items: flex-start; padding: 9px 9px 0 3px; gap: 10px; }
.files button { width: 125px; height: 44px; margin-top: 2px; border: 0; border-radius: 5px; background: #1a7dca; color: #fff; }
.file-list { flex: 1; height: 90px; display: flex; justify-content: flex-end; border: 1px solid #1a7dca; border-radius: 5px; }

.foot {
  flex: none;
  height: 36px;
  display: flex;
  align-items: center;
  justify-content: center;
  gap: 40px;
  padding-left: 27px;
  font: bold 17px "Liberation Serif", "DejaVu Sans", serif;
}
.foot svg { width: 40px; height: 32px; margin-left: 10px; }
```

FILE: app.js
```js
const icon = (id, cls = "") => `<svg class="${cls}"><use href="#${id}"/></svg>`;

const menu = [
  ["B1 - المركز الرئيسي [المركز الرئيسي]", "l1"],
  ["CPM - سند صرف نقد", "l2"],
  ["CPM1 - سند صرف نقد", ""],
  ["CPM2 - سند صرف نقد بسيط", ""],
  ["VCPM1 - سند صرف نقد - مورد", ""],
  ["MCPM1 - سند صرف نقد - فواتير و سدادات شهرية", ""],
  ["GCPM1 - سند صرف نقد - مصاريف و نثريات", ""],
  ["ECPM1 - سند صرف نقد - اجور و مرتبات", ""],
  ["ECPM3 - سند صرف نقد - سلفة", ""],
  ["", ""],
];
document.getElementById("menu").innerHTML = menu
  .map(([text, level]) => `<li>${icon("arrows", "green")}${icon("dots", "dots")}<a class="${level}" href="#menu">${text}</a></li>`)
  .join("");

const tools = [
  ["search", "بحث"], ["report", "تقرير"], ["docs", "مستندات"], ["people", "موظفين"],
  ["calc", "حاسبة"], ["money", "صندوق"], ["tools", "ادوات"], ["bigpin", "ملاحظة"],
  ["bag", "مشتريات"], ["money", "مبالغ"], ["list", "قائمة"], ["bookadd", "دفتر"], ["globe", "روابط"],
];
document.getElementById("icons").innerHTML = tools
  .map(([id, label]) => `<button aria-label="${label}">${icon(id)}</button>`)
  .join("");

const first = { code: "001050101", name: "عملاء مبيعات", party: "0000003", partyName: "محمد عباس العيدروس", amount: "50,000.00" };
const field = (label, value = "") => `<input type="text" aria-label="${label}" value="${value}">`;
const lookup = (label, value) => `<div class="code">${field(label, value)}<button aria-label="بحث ${label}">...</button></div>`;
let rows = "";
for (let n = 1; n <= 8; n++) {
  const r = n === 1 ? first : {};
  const amount = r.amount || "0.00";
  rows += `<tr>
    <td class="${n < 6 ? "open" : ""}"><div class="sel"><input type="checkbox" aria-label="تحديد ${n}"><b>${n}</b>${icon("arrows", n === 1 ? "red" : "green")}${icon("dots", "dots")}</div></td>
    <td>${lookup("رمز الحساب", r.code)}</td>
    <td>${field("اسم الحساب", r.name)}</td>
    <td>${lookup("رمز الجهة", r.party)}</td>
    <td>${field("اسم الجهة", r.partyName)}</td>
    <td>${lookup("رمز مركز الكلفة")}</td>
    <td>${field("مركز الكلفة")}</td>
    <td><span class="pick"><select aria-label="العملة"><option>ريال يمني</option></select>${icon("chev")}</span></td>
    <td>${field("سعر الصرف", "1.00")}</td>
    <td>${field("المبلغ", amount)}</td>
    <td class="gray">${field("المقابل", amount)}</td>
  </tr>`;
}
document.getElementById("rows").innerHTML = rows;
```
